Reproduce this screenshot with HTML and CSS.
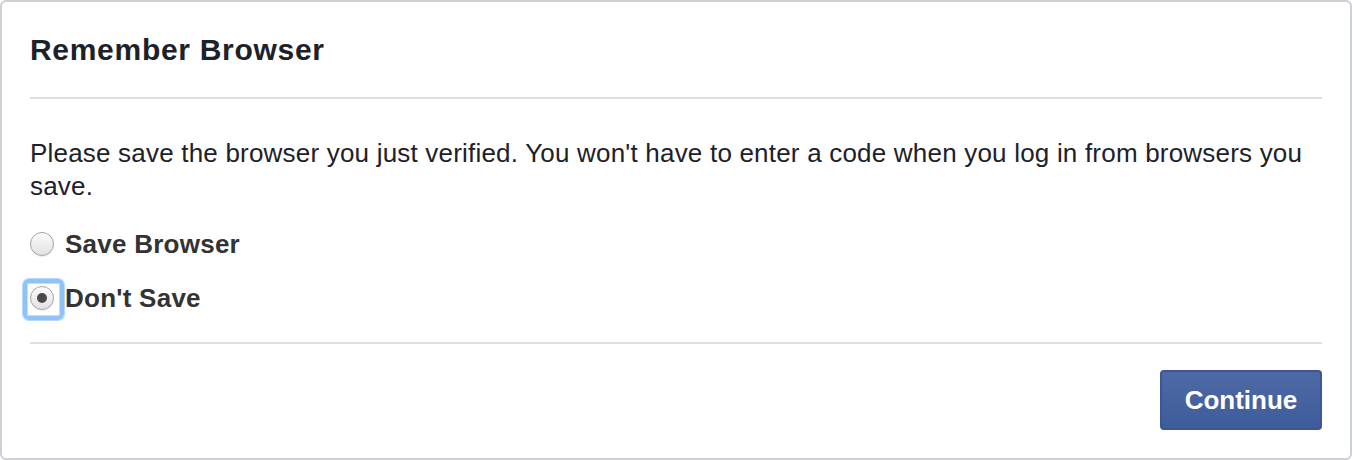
FILE: index.html
```html
<!DOCTYPE html>
<html lang="en">
<head>
<meta charset="utf-8">
<title>Remember Browser</title>
<link rel="stylesheet" href="styles.css">
</head>
<body>
<div class="dialog">
  <div class="header"><h2 class="title">Remember Browser</h2></div>
  <div class="content">
    <p class="desc">Please save the browser you just verified. You won't have to enter a code when you log in from browsers you save.</p>
    <div class="options">
      <label class="option"><span class="radio"></span><span class="label">Save Browser</span></label>
      <label class="option"><span class="radio checked focused"></span><span class="label">Don't Save</span></label>
    </div>
  </div>
  <div class="footer"><button class="btn">Continue</button></div>
</div>
</body>
</html>
```
FILE: styles.css
```css
html, body { margin: 0; padding: 0; background: #fff; }
body { font-family: "Liberation Sans", Arial, Helvetica, sans-serif; }
.dialog {
  width: 1352px;
  height: 460px;
  box-sizing: border-box;
  border: 2px solid #cfd0d3;
  border-radius: 6px;
  padding: 0 28px;
  display: flex;
  flex-direction: column;
}
.header {
  height: 95px;
  border-bottom: 2px solid #dddfe2;
  display: flex;
  align-items: center;
}
.title {
  margin: 0;
  font-size: 30px;
  font-weight: bold;
  color: #1d2129;
  letter-spacing: 0.7px;
}
.content { border-bottom: 2px solid #dddfe2; padding-bottom: 24px; }
.desc {
  margin: 38px 0 0;
  font-size: 26px;
  line-height: 33px;
  letter-spacing: 0.2px;
  color: #1d2129;
}
.options {
  margin-top: 21px;
  display: flex;
  flex-direction: column;
  gap: 14px;
}
.option {
  height: 40px;
  display: flex;
  align-items: center;
  gap: 11px;
}
.label {
  font-size: 26px;
  font-weight: bold;
  color: #333333;
  letter-spacing: 0.25px;
}
.radio {
  position: relative;
  width: 22px;
  height: 22px;
  border-radius: 50%;
  border: 1px solid #a3a3a3;
  background: linear-gradient(#fbfbfb, #e2e2e2);
  box-shadow: inset 0 1px 1px rgba(255,255,255,0.8), 0 1px 1px rgba(0,0,0,0.08);
  flex: none;
}
.radio.checked::after {
  content: "";
  position: absolute;
  left: 6px;
  top: 6px;
  width: 10px;
  height: 10px;
  border-radius: 50%;
  background: #4a4a4a;
}
.radio.focused::before {
  content: "";
  position: absolute;
  left: -8px;
  top: -8px;
  width: 33px;
  height: 33px;
  border: 4px solid #8fc2f8;
  border-radius: 6px;
  box-shadow: inset 0 0 0 1px #c3ddfb, 0 0 0 1px #b9d7fa;
}
.footer {
  flex: 1;
  display: flex;
  justify-content: flex-end;
  align-items: flex-start;
  padding-top: 26px;
}
.btn {
  width: 162px;
  height: 60px;
  border: 2px solid #3b5693;
  border-radius: 4px;
  background: linear-gradient(#4d6aa6, #3f5c9a);
  color: #fff;
  font-family: "Liberation Sans", Arial, Helvetica, sans-serif;
  font-size: 26px;
  font-weight: bold;
  padding: 0;
}
```
